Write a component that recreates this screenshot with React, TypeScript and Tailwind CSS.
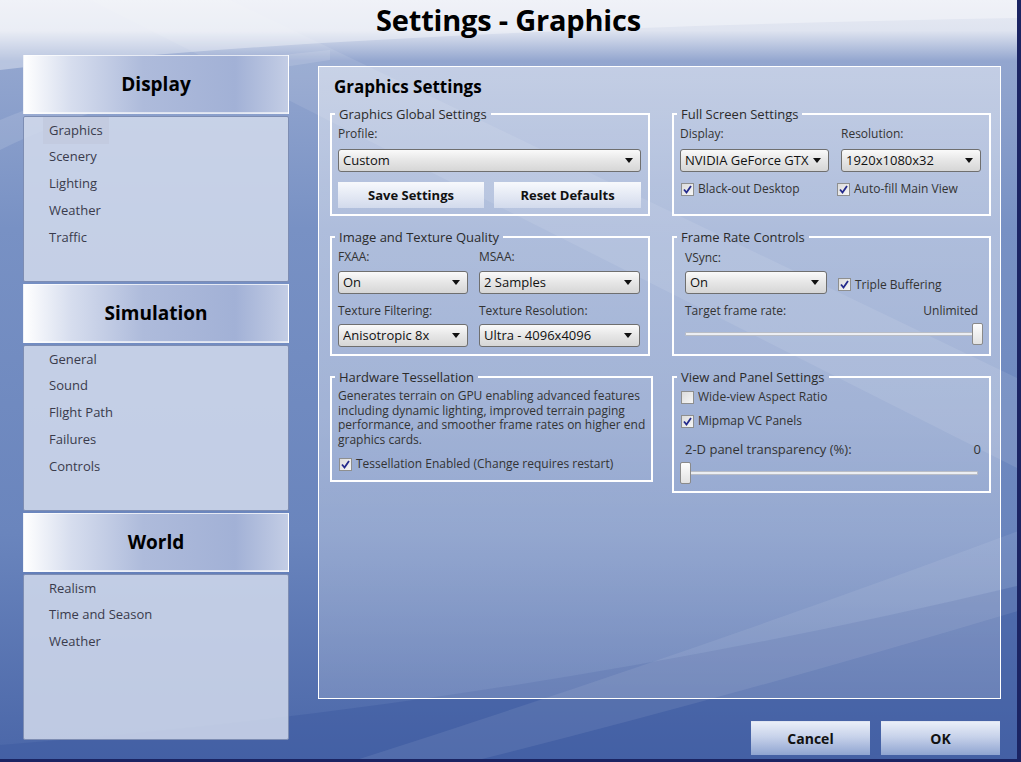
import React from "react";

type Section = { title: string; items: string[]; active?: string };

const sections: Section[] = [
  { title: "Display", items: ["Graphics", "Scenery", "Lighting", "Weather", "Traffic"], active: "Graphics" },
  { title: "Simulation", items: ["General", "Sound", "Flight Path", "Failures", "Controls"] },
  { title: "World", items: ["Realism", "Time and Season", "Weather"] },
];

function Backdrop() {
  return (
    <svg className="absolute inset-0" width="1021" height="762" viewBox="0 0 1021 762">
      <defs>
        <linearGradient id="sky" x1="0" y1="0" x2="0" y2="1">
          <stop offset="0" stopColor="#e8ebf4" />
          <stop offset="0.04" stopColor="#dfe4f0" />
          <stop offset="0.08" stopColor="#93a6cf" />
          <stop offset="0.3" stopColor="#7891c4" />
          <stop offset="0.7" stopColor="#6a85bd" />
          <stop offset="1" stopColor="#4a66a8" />
        </linearGradient>
      </defs>
      <rect width="1021" height="762" fill="url(#sky)" />
      <path d="M0,70 Q350,30 1021,18 L1021,0 L0,0 Z" fill="#ffffff" opacity="0.35" />
      <path d="M90,0 L230,0 L1021,380 L1021,470 Z" fill="#ffffff" opacity="0.09" />
      <path d="M0,120 Q120,70 330,50 L330,60 Q120,90 0,150 Z" fill="#ffffff" opacity="0.12" />
      <path d="M0,745 Q520,705 1021,585 L1021,762 L0,762 Z" fill="#3b58a0" opacity="0.45" />
      <path d="M350,762 Q700,650 1021,530 L1021,610 Q720,700 470,762 Z" fill="#ffffff" opacity="0.08" />
    </svg>
  );
}

function SideSection({ section }: { section: Section }) {
  return (
    <div className="flex flex-col gap-[2px]">
      <div className="h-[59px] flex items-center justify-center border border-white/70 bg-[linear-gradient(to_right,#ffffff_0%,#d6ddee_18%,#aebbdb_45%,#a2b1d6_80%,#c3cde5_100%)] shadow-[inset_0_-1px_0_rgba(255,255,255,0.6)]">
        <span className="text-[19px] font-bold text-black">{section.title}</span>
      </div>
      <div className="h-[166px] rounded-[2px] border border-[#7d8db3] bg-[#d2daec]/85 pl-[19px]">
        {section.items.map((item) => (
          <div
            key={item}
            className={
              "h-[26.8px] w-fit pl-[6px] pr-[6px] flex items-center text-[13px] text-[#3a3b4c] " +
              (item === section.active ? "bg-[#c3cbe0]" : "")
            }
          >
            {item}
          </div>
        ))}
      </div>
    </div>
  );
}

function Group({ title, className, children }: { title: string; className: string; children: React.ReactNode }) {
  return (
    <fieldset className={"border-2 border-white px-[6px] " + className}>
      <legend className="ml-[-3px] px-[4px] text-[13px] leading-[16px] text-[#2b2b2b]">{title}</legend>
      {children}
    </fieldset>
  );
}

function Label({ children, className = "" }: { children: React.ReactNode; className?: string }) {
  return <div className={"text-[12px] leading-[16px] text-[#333] " + className}>{children}</div>;
}

function Select({ value, className = "" }: { value: string; className?: string }) {
  return (
    <div
      className={
        "h-[23px] flex items-center rounded-[3px] border border-[#6f6f6f] bg-[linear-gradient(to_bottom,#fafafa,#e6e6e6_50%,#d6d6d6)] pl-[4px] pr-[7px] " +
        className
      }
    >
      <span className="flex-1 overflow-hidden whitespace-nowrap text-[13px] text-[#111]">{value}</span>
      <svg width="8" height="5" viewBox="0 0 8 5" className="ml-[4px] shrink-0">
        <path d="M0,0 L8,0 L4,5 Z" fill="#111" />
      </svg>
    </div>
  );
}

function Check({ label, checked = true, className = "" }: { label: string; checked?: boolean; className?: string }) {
  return (
    <div className={"flex items-center gap-[4px] text-[12px] leading-[16px] text-[#333] " + className}>
      <div className="w-[13px] h-[13px] border border-[#8e8f8f] bg-[linear-gradient(to_bottom_right,#dcdcdc,#f6f6f6)] flex items-center justify-center">
        {checked && (
          <svg width="9" height="9" viewBox="0 0 9 9">
            <path d="M1,4.5 L3.5,7.5 L8,1" fill="none" stroke="#232a8c" strokeWidth="1.8" />
          </svg>
        )}
      </div>
      <span>{label}</span>
    </div>
  );
}

function Slider({ at }: { at: "start" | "end" }) {
  return (
    <div className="relative h-[22px] flex items-center">
      <div className="w-full h-[4px] rounded-[1px] border border-[#b9bdc6] bg-[#eceef2]" />
      <div
        className={
          "absolute top-0 w-[11px] h-[22px] rounded-[2px] border border-[#8a8a8a] bg-[linear-gradient(to_bottom,#fdfdfd,#e2e2e2)] " +
          (at === "end" ? "right-0" : "left-[-5px]")
        }
      />
    </div>
  );
}

function GrayButton({ children, className = "" }: { children: React.ReactNode; className?: string }) {
  return (
    <div
      className={
        "h-[26px] flex items-center justify-center text-[13px] font-bold text-[#111] bg-[linear-gradient(to_bottom,#f6f8fc,#e4e9f4_50%,#d2daec)] border-t border-white/80 " +
        className
      }
    >
      {children}
    </div>
  );
}

function DialogButton({ children }: { children: React.ReactNode }) {
  return (
    <div className="w-[119px] h-[34px] flex items-center justify-center text-[14px] font-bold text-[#111] bg-[linear-gradient(to_bottom,#e9eef8,#c7d2ea_45%,#8fa4d1)] border-t border-white/70">
      {children}
    </div>
  );
}

export default function App() {
  return (
    <div className="relative w-[1021px] h-[762px] overflow-hidden border-r-4 border-b-[3px] border-[#1b2463] font-['Open_Sans',sans-serif]">
      <Backdrop />
      <div className="relative flex flex-col">
        <div className="h-[40px] flex items-center justify-center">
          <h1 className="text-[29px] font-bold text-black tracking-[-0.2px]">Settings - Graphics</h1>
        </div>

        <div className="flex mt-[15px]">
          {/* category list */}
          <aside className="ml-[23px] w-[266px] flex flex-col gap-[2px]">
            {sections.map((s) => (
              <SideSection key={s.title} section={s} />
            ))}
          </aside>

          <main className="ml-[29px] mt-[11px] w-[683px] flex flex-col">
            <div className="h-[633px] border border-white bg-[linear-gradient(to_bottom,rgba(255,255,255,0.45),rgba(255,255,255,0.35)_55%,rgba(255,255,255,0.18))] px-[11px]">
              <h2 className="mt-[9px] ml-[4px] text-[17px] font-bold leading-[22px] text-black">Graphics Settings</h2>

              <div className="mt-[8px] grid grid-cols-[320px_319px] gap-x-[22px] gap-y-[13px] items-start">
                <Group title="Graphics Global Settings" className="h-[110px]">
                  <Label className="mt-[4px]">Profile:</Label>
                  <Select value="Custom" className="mt-[7px] mr-[1px]" />
                  <div className="mt-[10px] flex gap-[10px]">
                    <GrayButton className="w-[146px]">Save Settings</GrayButton>
                    <GrayButton className="w-[147px]">Reset Defaults</GrayButton>
                  </div>
                </Group>

                <Group title="Full Screen Settings" className="h-[110px]">
                  <div className="flex gap-[12px]">
                    <div className="w-[149px]">
                      <Label className="mt-[4px]">Display:</Label>
                      <Select value="NVIDIA GeForce GTX" className="mt-[7px]" />
                    </div>
                    <div className="w-[140px]">
                      <Label className="mt-[4px]">Resolution:</Label>
                      <Select value="1920x1080x32" className="mt-[7px]" />
                    </div>
                  </div>
                  <div className="mt-[9px] flex">
                    <Check label="Black-out Desktop" className="w-[156px] ml-[1px]" />
                    <Check label="Auto-fill Main View" />
                  </div>
                </Group>

                <Group title="Image and Texture Quality" className="h-[127px]">
                  <div className="grid grid-cols-[130px_161px] gap-x-[11px]">
                    <div>
                      <Label className="mt-[4px]">FXAA:</Label>
                      <Select value="On" className="mt-[6px]" />
                    </div>
                    <div>
                      <Label className="mt-[4px]">MSAA:</Label>
                      <Select value="2 Samples" className="mt-[6px]" />
                    </div>
                    <div>
                      <Label className="mt-[9px]">Texture Filtering:</Label>
                      <Select value="Anisotropic 8x" className="mt-[5px]" />
                    </div>
                    <div>
                      <Label className="mt-[9px]">Texture Resolution:</Label>
                      <Select value="Ultra - 4096x4096" className="mt-[5px]" />
                    </div>
                  </div>
                </Group>

                <Group title="Frame Rate Controls" className="h-[127px]">
                  <div className="px-[5px]">
                    <Label className="mt-[5px]">VSync:</Label>
                    <div className="mt-[5px] flex items-center gap-[11px]">
                      <Select value="On" className="w-[142px]" />
                      <Check label="Triple Buffering" className="mt-[4px]" />
                    </div>
                    <div className="mt-[9px] flex justify-between">
                      <Label>Target frame rate:</Label>
                      <Label>Unlimited</Label>
                    </div>
                    <div className="mt-[4px] mr-[-5px]">
                      <Slider at="end" />
                    </div>
                  </div>
                </Group>

                <Group title="Hardware Tessellation" className="h-[113px]">
                  <p className="mt-[4px] text-[12px] leading-[14.5px] text-[#333] whitespace-nowrap">
                    Generates terrain on GPU enabling advanced features
                    <br />
                    including dynamic lighting, improved terrain paging
                    <br />
                    performance, and smoother frame rates on higher end
                    <br />
                    graphics cards.
                  </p>
                  <Check label="Tessellation Enabled (Change requires restart)" className="mt-[9px] ml-[1px]" />
                </Group>

                <Group title="View and Panel Settings" className="h-[124px]">
                  <Check label="Wide-view Aspect Ratio" className="mt-[4px] ml-[1px]" checked={false} />
                  <Check label="Mipmap VC Panels" className="mt-[8px] ml-[1px]" />
                  <div className="mt-[11px] ml-[5px] mr-[2px] flex justify-between text-[13px] leading-[18px] text-[#333]">
                    <span>2-D panel transparency (%):</span>
                    <span>0</span>
                  </div>
                  <div className="mt-[4px] ml-[5px] mr-[5px]">
                    <Slider at="start" />
                  </div>
                </Group>
              </div>
            </div>

            <div className="mt-[22px] flex justify-end gap-[11px] pr-[1px]">
              <DialogButton>Cancel</DialogButton>
              <DialogButton>OK</DialogButton>
            </div>
          </main>
        </div>
      </div>
    </div>
  );
}
